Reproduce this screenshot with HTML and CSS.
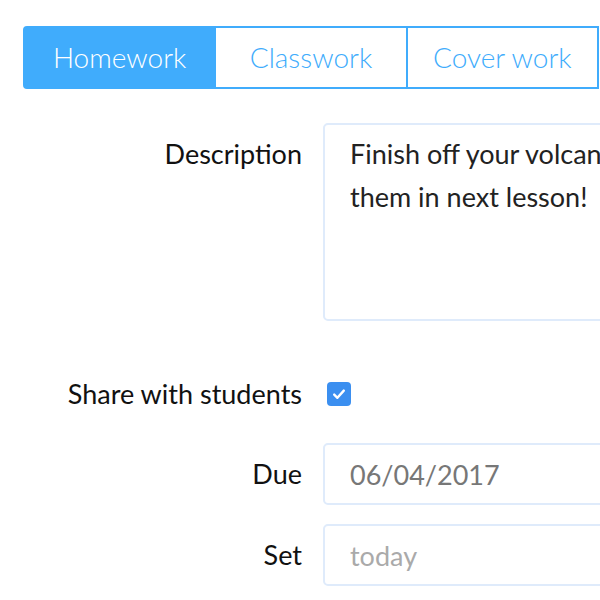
FILE: index.html
```html
<!DOCTYPE html>
<html lang="en">
  <head>
    <meta charset="UTF-8" />
    <meta name="viewport" content="width=device-width, initial-scale=1.0" />
    <title>Set work</title>
    <link rel="stylesheet" href="styles.css">
  </head>
  <body>
    <div class="page">
      <div class="tabs">
        <div class="tab active">Homework</div>
        <div class="tab">Classwork</div>
        <div class="tab">Cover work</div>
      </div>
      <form class="work-form" action="#">
        <label class="label label-desc" for="desc">Description</label>
        <textarea id="desc" class="field textarea">Finish off your volcano posters, we will be presenting them in next lesson!</textarea>

        <label class="label label-share">Share with students</label>
        <div class="share">
          <span class="checkbox">
            <svg width="16" height="16" viewBox="0 0 16 16">
              <path d="M3.2 8.6 L6.4 11.8 L12.8 4.6" fill="none" stroke="#fff" stroke-width="2.4" stroke-linecap="round" stroke-linejoin="round" />
            </svg>
          </span>
        </div>

        <label class="label" for="due">Due</label>
        <input id="due" class="field input" type="text" value="06/04/2017" />

        <label class="label" for="set">Set</label>
        <input id="set" class="field input" type="text" placeholder="today" />
      </form>
    </div>
  </body>
</html>
```

FILE: styles.css
```css
body {
  margin: 0;
  font-family: Lato, "Open Sans", sans-serif;
  color: #111;
  background: #fff;
}
.page {
  padding: 26px 0 0 23px;
  width: 577px;
  height: 574px;
  overflow: hidden;
}
.tabs {
  display: flex;
  height: 63px;
}
.tab {
  flex: 1;
  display: flex;
  align-items: center;
  justify-content: center;
  font-size: 28px;
  font-weight: 300;
  color: #40acfc;
  border: 2px solid #40acfc;
  border-left-width: 0;
  box-sizing: border-box;
  padding-bottom: 2px;
}
.tab:last-child {
  margin-right: 1px;
}
.tab.active {
  background-color: #40acfc;
  color: #fff;
  border-radius: 4px 0 0 4px;
  border-left-width: 2px;
  flex-basis: 2px;
}
.work-form {
  display: grid;
  grid-template-columns: 279px 700px;
  column-gap: 21px;
  row-gap: 19px;
  margin-top: 34px;
}
.label {
  font-size: 27px;
  text-align: right;
  line-height: 62px;
  white-space: nowrap;
}
.label-desc {
  line-height: 43px;
  padding-top: 9px;
}
.label-share,
.share {
  margin-top: 23px;
  height: 61px;
}
.field {
  font-family: Lato, "Open Sans", sans-serif;
  font-size: 27px;
  border: 2px solid #dfebfb;
  border-radius: 5px;
  box-sizing: border-box;
  padding: 0 25px;
  outline: none;
  background: #fff;
}
.textarea {
  height: 198px;
  padding-top: 7px;
  line-height: 43px;
  color: #222;
  resize: none;
  overflow: hidden;
}
.input {
  height: 62px;
  color: #777;
}
.input::placeholder {
  color: #aaa;
}
.share {
  display: flex;
  align-items: center;
}
.checkbox {
  width: 24px;
  height: 24px;
  margin-left: 4px;
  border-radius: 4px;
  background-color: #3b8ff0;
  display: flex;
  align-items: center;
  justify-content: center;
}
```
